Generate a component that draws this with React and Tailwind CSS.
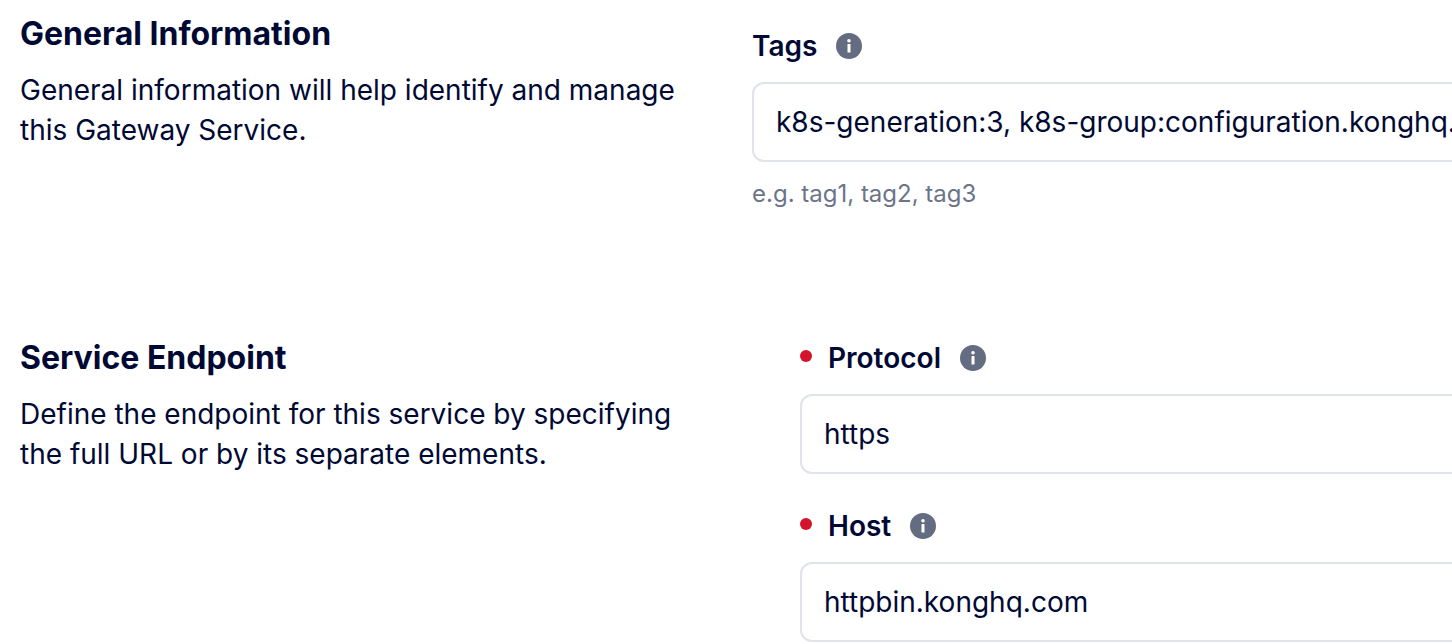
const InfoDot = () => (
  <svg width="26" height="26" viewBox="0 0 26 26" className="shrink-0">
    <circle cx="13" cy="13" r="13" fill="#646c82" />
    <rect x="11.5" y="11" width="3" height="8.5" rx="0.5" fill="#fff" />
    <circle cx="13" cy="7.8" r="1.8" fill="#fff" />
  </svg>
);

const Field = ({ label, value, required, help }) => (
  <div className="flex flex-col">
    <div className="flex items-center h-7">
      {required && <span className="w-3 h-3 rounded-full bg-[#d3142c] mr-4 mb-1 shrink-0" />}
      <span className="text-[28px] leading-7 font-semibold text-[#000933]">{label}</span>
      <span className="ml-[19px]"><InfoDot /></span>
    </div>
    <div className="mt-[22px] h-20 border-2 border-[#e0e4ea] rounded-xl flex items-center px-[22px] overflow-hidden whitespace-nowrap text-[28px] text-[#000933] w-[800px]">
      {value}
    </div>
    {help && <p className="mt-4 text-2xl leading-8 text-[#6c7489]">{help}</p>}
  </div>
);

export default function App() {
  return (
    <div className="w-[1452px] h-[644px] overflow-hidden bg-white font-['Inter',sans-serif]">
      <div className="flex flex-col pl-5">
        <section className="flex h-[324px]">
          <div className="w-[732px] shrink-0 pt-4">
            <h2 className="text-[32px] leading-9 font-bold text-[#000933]">General Information</h2>
            <p className="mt-[18px] text-[28px] leading-10 text-[#000933]">General information will help identify and manage<br />this Gateway Service.</p>
          </div>
          <div className="pt-8 shrink-0">
            <Field label="Tags" value="k8s-generation:3, k8s-group:configuration.konghq.com, k8s-kind:KongIngress" help="e.g. tag1, tag2, tag3" />
          </div>
        </section>
        <section className="flex">
          <div className="w-[780px] shrink-0 pt-4">
            <h2 className="text-[32px] leading-9 font-bold text-[#000933]">Service Endpoint</h2>
            <p className="mt-[18px] text-[28px] leading-10 text-[#000933]">Define the endpoint for this service by specifying<br />the full URL or by its separate elements.</p>
          </div>
          <div className="pt-5 shrink-0 flex flex-col gap-[38px]">
            <Field label="Protocol" value="https" required />
            <Field label="Host" value="httpbin.konghq.com" required />
          </div>
        </section>
      </div>
    </div>
  );
}
